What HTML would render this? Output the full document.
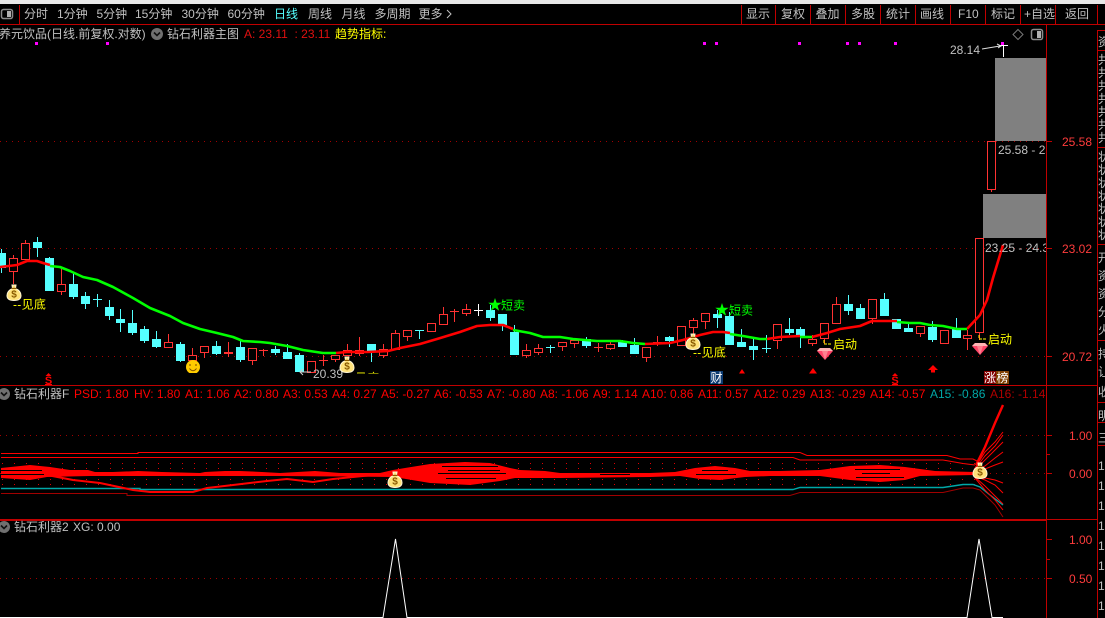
<!DOCTYPE html>
<html><head><meta charset="utf-8"><style>
html,body{margin:0;padding:0;background:#000;width:1105px;height:618px;overflow:hidden}
svg{position:absolute;left:0;top:0;display:block}
text{font-family:"Liberation Sans","Noto Sans CJK SC",sans-serif;font-size:12px;fill:#c0c0c0}
.r{fill:#f00}.y{fill:#ff0}.g{fill:#0f0}.ax{fill:#ff3c3c}
.s{fill:#f00;font-size:11px;font-weight:bold}
.d{fill:#8a5a00;font-size:10px;font-weight:bold}
</style></head><body>
<svg width="1105" height="618" viewBox="0 0 1105 618">
<defs>
<clipPath id="main"><rect x="0" y="25" width="1046" height="360"/></clipPath>
<clipPath id="cut"><rect x="340" y="360" width="60" height="13.5"/></clipPath>
<g id="bag">
<path d="M-2-8H2L1.5-4.5C5-3 7-0.5 7 2.5 7 6 4 7.5 0 7.5-4 7.5-7 6-7 2.5-7-0.5-5-3-1.5-4.5Z" fill="#ffe27a" stroke="#fff5d5"/>
<path d="M-2.5-4.6H2.5" stroke="#8a5a00" stroke-width="1.2"/>
</g>
<g id="gem">
<path d="M-8-3-5-6H5L8-3 0 6Z" fill="#ff4468"/>
<path d="M-8-3-5-6H5L8-3Z" fill="#ffb4b4"/>
<path d="M-3-3 0 6 3-3Z" fill="#ff8090"/>
</g>
<path id="star" d="M0-7 1.6-2.2H6.7L2.6.8 4.1 5.7 0 2.7-4.1 5.7-2.6.8-6.7-2.2H-1.6Z" fill="#0f0"/>
<g id="chev"><circle r="6" fill="#707070"/><path d="M-3-1.5 0 1.5 3-1.5" fill="none" stroke="#111" stroke-width="1.6"/></g>
</defs>

<!-- top bar -->
<rect x="0" y="0" width="1105" height="4" fill="#e8e8e8"/>
<rect x="1.5" y="9.5" width="11" height="9" rx="2" fill="none" stroke="#8c8c8c" stroke-width="1.5"/>
<rect x="7" y="11" width="4" height="6" fill="#b0b0b0"/>
<g stroke="#c00000" stroke-width="1" shape-rendering="crispEdges">
<path d="M19.5 5V24M741.5 5V24M775.5 5V24M810.5 5V24M845.5 5V24M880.5 5V24M915.5 5V24M950.5 5V24M985.5 5V24M1020.5 5V24M1055.5 5V24M1097.5 5V24"/>
<path d="M0 24.5H1105M1046.5 24V618M1097.5 30V618M0 385.5H1097M0 519.5H1097M0 520.5H1046M1097 30.5H1105M1097 50.5H1105M1097 147.5H1105M1097 244.5H1105M1097 340.5H1105M1097 402.5H1105M1097 422.5H1105M1097 445.5H1105"/>
<path d="M1046 141.5H1052M1046 248.5H1052M1046 356.5H1052M1046 435.5H1052M1046 454.5H1050M1046 473.5H1052M1046 539.5H1052M1046 559.5H1050M1046 578.5H1052"/>
</g>
<text x="24" y="18">分时</text><text x="57" y="18">1分钟</text><text x="96.5" y="18">5分钟</text><text x="135" y="18">15分钟</text><text x="181.5" y="18">30分钟</text><text x="227.5" y="18">60分钟</text>
<text x="274" y="18" style="fill:#5ff">日线</text><text x="308" y="18">周线</text><text x="341.5" y="18">月线</text><text x="374.5" y="18">多周期</text><text x="418.5" y="18">更多</text>
<path d="M447 10 451 14 447 18" fill="none" stroke="#c0c0c0"/>
<text x="746" y="18">显示</text><text x="781" y="18">复权</text><text x="815.5" y="18">叠加</text><text x="851" y="18">多股</text><text x="886" y="18">统计</text><text x="920" y="18">画线</text><text x="958" y="18">F10</text><text x="991" y="18">标记</text><text x="1024" y="18">+自选</text><text x="1065" y="18">返回</text>

<!-- header row -->
<text x="-1" y="38">养元饮品(日线.前复权.对数)</text>
<use href="#chev" x="157" y="34"/>
<text x="167" y="38">钻石利器主图</text>
<text x="244" y="38" style="fill:#e01010">A: 23.11&#160;&#160;: 23.11</text>
<text x="335" y="38" class="y">趋势指标:</text>
<path d="M1018 29.5 1023 34.5 1018 39.5 1013 34.5Z" fill="none" stroke="#777"/>
<rect x="1031.5" y="29.5" width="11" height="10" rx="2" fill="none" stroke="#8c8c8c" stroke-width="1.5"/>
<rect x="1037" y="31" width="4" height="7" fill="#b0b0b0"/>

<!-- magenta marks -->
<g fill="#f0f" shape-rendering="crispEdges"><rect x="35" y="42" width="3" height="3"/><rect x="106" y="42" width="3" height="3"/><rect x="703" y="42" width="3" height="3"/><rect x="715" y="42" width="3" height="3"/><rect x="798" y="42" width="3" height="3"/><rect x="846" y="42" width="3" height="3"/><rect x="858" y="42" width="3" height="3"/><rect x="894" y="42" width="3" height="3"/><rect x="1001" y="42" width="3" height="3"/></g>

<!-- gray gaps -->
<rect x="995" y="58" width="51" height="83" fill="#808080"/>
<rect x="983" y="194" width="63" height="44" fill="#808080"/>

<!-- dotted grid -->
<g stroke="#a00000" stroke-dasharray="1 5" fill="none" shape-rendering="crispEdges">
<path d="M0 141.5H1046M0 248.5H1046M0 356.5H1046M0 435.5H1046M0 473.5H1046M0 578.5H1046"/>
</g>

<g clip-path="url(#main)">
<!-- cyan candles -->
<path shape-rendering="crispEdges" fill="#55ffff" stroke="#55ffff" d="M1.5 249V273M-2.5 253.5h8V267.5h-8zM37.5 237V257M33.5 242.5h8V247.5h-8zM49.5 257V290M45.5 258.5h8V290.5h-8zM73.5 273V299M69.5 284.5h8V296.5h-8zM85.5 292V309M81.5 296.5h8V303.5h-8zM109.5 300V320M105.5 307.5h8V315.5h-8zM120.5 309V332M116.5 319.5h8V322.5h-8zM132.5 310V335M128.5 323.5h8V332.5h-8zM144.5 326V343M140.5 329.5h8V340.5h-8zM156.5 331V348M152.5 339.5h8V346.5h-8zM180.5 342V362M176.5 344.5h8V360.5h-8zM216.5 341V355M212.5 346.5h8V353.5h-8zM240.5 341V362M236.5 347.5h8V359.5h-8zM275.5 346V355M271.5 349.5h8V352.5h-8zM287.5 344V358M283.5 352.5h8V358.5h-8zM299.5 353V371M295.5 355.5h8V371.5h-8zM371.5 344V362M367.5 344.5h8V351.5h-8zM490.5 305V321M486.5 310.5h8V317.5h-8zM502.5 314V331M498.5 314.5h8V324.5h-8zM514.5 325V355M510.5 332.5h8V354.5h-8zM586.5 337V348M582.5 339.5h8V345.5h-8zM622.5 340V346M618.5 342.5h8V346.5h-8zM634.5 338V354M630.5 345.5h8V353.5h-8zM669.5 336V347M665.5 337.5h8V340.5h-8zM717.5 310V328M713.5 314.5h8V317.5h-8zM729.5 312V344M725.5 316.5h8V344.5h-8zM741.5 329V347M737.5 342.5h8V346.5h-8zM753.5 337V360M749.5 346.5h8V349.5h-8zM789.5 318V335M785.5 329.5h8V332.5h-8zM800.5 327V348M796.5 329.5h8V336.5h-8zM848.5 295V315M844.5 304.5h8V310.5h-8zM860.5 304V318M856.5 308.5h8V318.5h-8zM884.5 293V315M880.5 299.5h8V315.5h-8zM896.5 319V329M892.5 319.5h8V328.5h-8zM908.5 322V332M904.5 328.5h8V331.5h-8zM932.5 321V342M928.5 327.5h8V339.5h-8zM956.5 318V337M952.5 329.5h8V337.5h-8z"/>
<path shape-rendering="crispEdges" fill="none" stroke="#55ffff" d="M97.5 294V307M93 299.5h9M419.5 330V339M415 330.5h9M550.5 345V353M546 347.5h9M766.5 335V353M762 348.5h9"/>
<!-- red candles -->
<path shape-rendering="crispEdges" fill="#000" stroke="#ff3232" d="M13.5 255V258M13.5 271V284M9.5 258.5h8V271.5h-8zM25.5 240V243M21.5 243.5h8V259.5h-8zM61.5 267V284M61.5 291V295M57.5 284.5h8V291.5h-8zM168.5 334V342M164.5 342.5h8V347.5h-8zM192.5 348V355M188.5 355.5h8V360.5h-8zM204.5 352V358M200.5 346.5h8V352.5h-8zM252.5 360V365M248.5 348.5h8V360.5h-8zM311.5 372V373M307.5 361.5h8V372.5h-8zM335.5 359V362M331.5 355.5h8V359.5h-8zM347.5 344V350M343.5 350.5h8V355.5h-8zM359.5 337V350M359.5 353V356M355.5 350.5h8V353.5h-8zM383.5 344V349M383.5 355V358M379.5 349.5h8V355.5h-8zM395.5 330V333M391.5 333.5h8V349.5h-8zM407.5 336V341M403.5 330.5h8V336.5h-8zM431.5 331V332M427.5 323.5h8V331.5h-8zM443.5 307V314M439.5 314.5h8V324.5h-8zM466.5 304V309M466.5 313V316M462.5 309.5h8V313.5h-8zM526.5 344V350M526.5 355V358M522.5 350.5h8V355.5h-8zM538.5 344V348M538.5 352V355M534.5 348.5h8V352.5h-8zM562.5 346V351M558.5 342.5h8V346.5h-8zM574.5 343V348M570.5 340.5h8V343.5h-8zM610.5 341V344M610.5 348V350M606.5 344.5h8V348.5h-8zM646.5 357V362M642.5 347.5h8V357.5h-8zM677.5 326.5h8V345.5h-8zM693.5 318V320M693.5 327V335M689.5 320.5h8V327.5h-8zM705.5 321V329M701.5 313.5h8V321.5h-8zM777.5 340V349M773.5 324.5h8V340.5h-8zM812.5 335V339M812.5 343V346M808.5 339.5h8V343.5h-8zM824.5 338V344M820.5 323.5h8V338.5h-8zM836.5 297V304M836.5 323V324M832.5 304.5h8V323.5h-8zM872.5 318V324M868.5 299.5h8V318.5h-8zM920.5 333V337M916.5 326.5h8V333.5h-8zM940.5 330.5h8V343.5h-8zM967.5 330V335M967.5 338V350M963.5 335.5h8V338.5h-8zM979.5 332V340M975.5 238.5h8V332.5h-8zM991.5 189V192M987.5 141.5h8V189.5h-8z"/>
<path shape-rendering="crispEdges" fill="none" stroke="#ff3232" d="M228.5 342V357M224 352.5h9M224 353.5h9M263.5 349V356M259 350.5h9M323.5 355V366M319 360.5h9M454.5 309V322M450 311.5h9M598.5 343V352M594 347.5h9M657.5 336V346M653 342.5h9"/>
<path shape-rendering="crispEdges" fill="none" stroke="#fff" d="M478.5 304V316M474 310.5h9M1003.5 45V57M999 45.5h9"/>

<!-- MA -->
<g fill="none" stroke-width="2.6" stroke-linejoin="round">
<g stroke="#f00">
<polyline points="0,267 17,265 27,261 37,261 43,263 50,265"/>
<polyline points="336,353 347,352 367,352 388,351 400,348 420,344 437,339 460,332 477,326 490,325 503,325 513,329"/>
<polyline points="645,344 670,343 683,340 700,335 713,332 723,332 730,333"/>
<polyline points="767,339 780,337 800,336"/>
<polyline points="812,337 827,333 840,329 860,326 872,321 897,321"/>
<polyline points="967,329 980,315 987,300 993,278 1003,245"/>
</g>
<g stroke="#0f0">
<polyline points="50,266 60,267 70,271 83,277 97,280 113,287 133,298 150,308 170,316 183,323 200,329 217,333 233,337 243,341 260,342 270,343 287,346 303,350 323,353 336,353"/>
<polyline points="513,330 530,333 543,337 560,337 573,339 597,341 620,341 633,343 645,344"/>
<polyline points="730,334 743,336 760,339 767,339"/>
<polyline points="800,337 812,337"/>
<polyline points="897,322 910,323 920,323 930,325 943,326 957,329 967,329"/>
</g>
</g>
</g>

<!-- overlaid text main -->
<svg x="0" y="0" width="1046" height="618" overflow="hidden">
<text x="950" y="54">28.14</text>
<path d="M982 49 1000 46M997 44 1001 46 998 48" fill="none" stroke="#ddd"/>
<text x="998" y="154">25.58 - 25.58</text>
<text x="985" y="252">23.25 - 24.35</text>
<path d="M311 372H300M303 369 300 372 303 375" fill="none" stroke="#ccc"/>
<text x="313" y="378">20.39</text>
</svg>
<g clip-path="url(#cut)"><text x="355" y="382" class="y">见底</text></g>

<!-- axis labels -->
<text x="1062" y="146" class="ax">25.58</text><text x="1062" y="253" class="ax">23.02</text><text x="1062" y="361" class="ax">20.72</text>
<text x="1069" y="440" class="ax">1.00</text><text x="1069" y="478" class="ax">0.00</text><text x="1069" y="544" class="ax">1.00</text><text x="1069" y="583" class="ax">0.50</text>

<!-- signals -->
<use href="#bag" x="14" y="293"/><text x="14" y="297.5" text-anchor="middle" class="d">$</text>
<text x="13" y="308.5" class="y" letter-spacing=".3">--见底</text>
<circle cx="193" cy="367" r="7" fill="#ffcc00"/><rect x="186" y="373" width="14" height="2" fill="#000"/>
<path d="M190 364v2M196 364v2M189.5 368.5Q193 373 196.5 368.5" stroke="#7a4a00" fill="none"/>
<use href="#bag" x="347" y="365"/><text x="347" y="369.5" text-anchor="middle" class="d">$</text>
<use href="#star" x="495" y="305"/><text x="501" y="309.5" class="g">短卖</text>
<use href="#bag" x="693" y="342"/><text x="693" y="346.5" text-anchor="middle" class="d">$</text>
<text x="693" y="356.5" class="y" letter-spacing=".3">--见底</text>
<use href="#star" x="722" y="310"/><text x="729" y="314.5" class="g">短卖</text>
<path d="M824 340V344H831" fill="none" stroke="#ff0" stroke-dasharray="3 1"/>
<text x="833" y="348.5" class="y">启动</text>
<use href="#gem" x="825" y="354"/>
<path d="M979 335V339H986" fill="none" stroke="#ff0" stroke-dasharray="3 1"/>
<text x="988" y="343.5" class="y">启动</text>
<use href="#gem" x="980" y="349"/>
<path d="M739 373.500 742 369 745 373.500ZM809 373.500 813 368 817 373.500ZM928 370 933 365 938 370H935V372.500H931V370Z" fill="#f00"/>
<path d="M45.500 376 48.500 373 51.500 376ZM892 376 895 373 898 376Z" fill="#f00"/>
<text x="48.500" y="384" text-anchor="middle" class="s">S</text><path d="M45 384.500H52" stroke="#f00"/>
<text x="895" y="384" text-anchor="middle" class="s">S</text><path d="M892 384.500H898" stroke="#f00"/>
<rect x="710" y="371" width="13" height="13" fill="#0b3a70"/><text x="710.5" y="382" style="font-size:12px;fill:#fff">财</text>
<rect x="984" y="371" width="12" height="13" fill="#800000"/><rect x="996" y="371" width="13" height="13" fill="#804000"/>
<text x="984" y="382" style="fill:#fff">涨</text><text x="996.5" y="382" style="fill:#fff">榜</text>

<!-- panel 2 header -->
<use href="#chev" x="4" y="394"/>
<text x="14" y="398">钻石利器F</text>
<svg x="0" y="385" width="1046" height="20" overflow="hidden"><g transform="translate(0,13)">
<text x="74" class="r">PSD: 1.80</text><text x="134" class="r">HV: 1.80</text><text x="185" class="r">A1: 1.06</text><text x="234" class="r">A2: 0.80</text><text x="283" class="r">A3: 0.53</text><text x="332" class="r">A4: 0.27</text><text x="381" class="r">A5: -0.27</text><text x="434" class="r">A6: -0.53</text><text x="487" class="r">A7: -0.80</text><text x="540" class="r">A8: -1.06</text><text x="593" class="r">A9: 1.14</text><text x="642" class="r">A10: 0.86</text><text x="698" class="r">A11: 0.57</text><text x="754" class="r">A12: 0.29</text><text x="810" class="r">A13: -0.29</text><text x="870" class="r">A14: -0.57</text><text x="930" style="fill:#00a8a8">A15: -0.86</text><text x="990" style="fill:#b00000">A16: -1.14</text>
</g></svg>

<!-- panel 2 chart -->
<g fill="none" stroke="#e00000" stroke-dasharray="1 11" shape-rendering="crispEdges"><path d="M2 463.5H975M2 468.5H975M2 479.5H975M2 484.5H975"/></g>
<g fill="none" stroke-width="1">
<polyline stroke="#f00" points="1,453.5 138,453.5 138,452.5 800,452.5 807,455.5 947,455.5 960,459 973,459 979,462"/>
<polyline stroke="#f00" points="1,457.5 150,457.5 150,457.5 793,457.5 800,460 943,460 963,463.5 975,465"/>
<polyline stroke="#a00000" points="1,493.5 127,493.5 127,495.5 790,495.5 800,492.5 943,492.5 963,488 973,488 980,490 995,505 1003,517"/>
<polyline stroke="#00a8a8" stroke-width="1.4" points="1,488.5 140,488.5 140,489.5 793,489.5 800,487.5 943,487.5 963,484.5 973,484.5 980,487 990,495 1003,505"/>
</g>
<polygon fill="#f00" points="1,468 30,465 50,467 70,470 88,470 95,472 113,472 138,471 162,472 200,473 205,472 225,471 240,471 262,472 280,473 315,471 340,473 380,473 393,470 405,468 430,464 465,462 490,463 510,468 520,470 545,471 560,473 650,473 675,472 695,468 715,466 735,468 750,471 780,471 820,470 850,466 880,465 905,467 935,471 975,472 980,470 980,476 975,475 920,476 905,480 880,482 850,480 820,476 770,476 745,477 720,480 700,479 680,476 650,477 560,478 515,478 500,481 470,485 430,483 400,478 393,477 280,476 200,476 160,476 90,476 47,477 30,480 1,478"/>
<g stroke="#000" shape-rendering="crispEdges"><path d="M1 470.5H42M1 474.5H44M442 466.5H498M448 470.5H500M438 473.5H506M446 478.5H496M600 474.5H630M702 470.5H728M696 474.5H736M855 469.5H900M862 473.5H890M856 477.5H904"/></g>
<polyline fill="none" stroke="#f00" stroke-width="2" points="47,475 73,480 100,483 133,490 150,492 193,492 207,488 233,485 267,481 287,479 313,482 333,479 393,473"/>
<g fill="none" stroke="#f00">
<polyline points="975,468 985,452 995,442 1003,432"/>
<polyline points="975,469 985,456 995,446 1003,435"/>
<polyline points="975,470 985,460 995,450 1003,442"/>
<polyline points="975,471 985,466 995,458 1003,452"/>
<polyline points="975,472 985,469 995,465 1003,462"/>
<polyline points="975,475 985,478 995,480 1003,483"/>
<polyline points="975,476 985,480 995,485 1003,493"/>
<polyline points="975,477 985,486 995,496 1003,504"/>
<polyline points="975,478 985,490 995,500 1003,510"/>
</g>
<polyline fill="none" stroke="#f00" stroke-width="2.4" points="976,465 985,447 995,423 1003,405"/>
<use href="#bag" x="395" y="480"/><text x="395" y="484.5" text-anchor="middle" class="d">$</text>
<use href="#bag" x="980" y="471"/><text x="980" y="475.5" text-anchor="middle" class="d">$</text>

<!-- panel 3 -->
<use href="#chev" x="4" y="527"/>
<text x="14" y="531">钻石利器2</text><text x="73" y="531">XG: 0.00</text>
<polyline fill="none" stroke="#fff" points="0,617.5 383,617.5 395.5,539 407,617.5 967,617.5 979,539 992,617.5 1003,617.5"/>

<!-- right strip -->
<svg x="1098" y="30" width="7" height="588" overflow="hidden">
<text x="0" y="16">资</text>
<text x="0" y="34">共</text><text x="0" y="47">共</text><text x="0" y="60">共</text><text x="0" y="73">共</text><text x="0" y="86">共</text><text x="0" y="99">共</text><text x="0" y="112">共</text>
<text x="0" y="131">状</text><text x="0" y="144">状</text><text x="0" y="157">状</text><text x="0" y="170">状</text><text x="0" y="183">状</text><text x="0" y="196">状</text><text x="0" y="209">状</text>
<text x="0" y="232">开</text><text x="0" y="250">资</text><text x="0" y="268">资</text><text x="0" y="286">分</text><text x="0" y="304">火</text>
<text x="0" y="328">持</text><text x="0" y="346">让</text><text x="0" y="366">收</text><text x="0" y="390">明</text><text x="0" y="412">三</text>
<text x="0" y="440">1</text><text x="0" y="460">1</text><text x="0" y="480">1</text><text x="0" y="500">1</text><text x="0" y="520">1</text><text x="0" y="540">1</text><text x="0" y="560">1</text><text x="0" y="580">1</text>
</svg>
</svg>
</body></html>
